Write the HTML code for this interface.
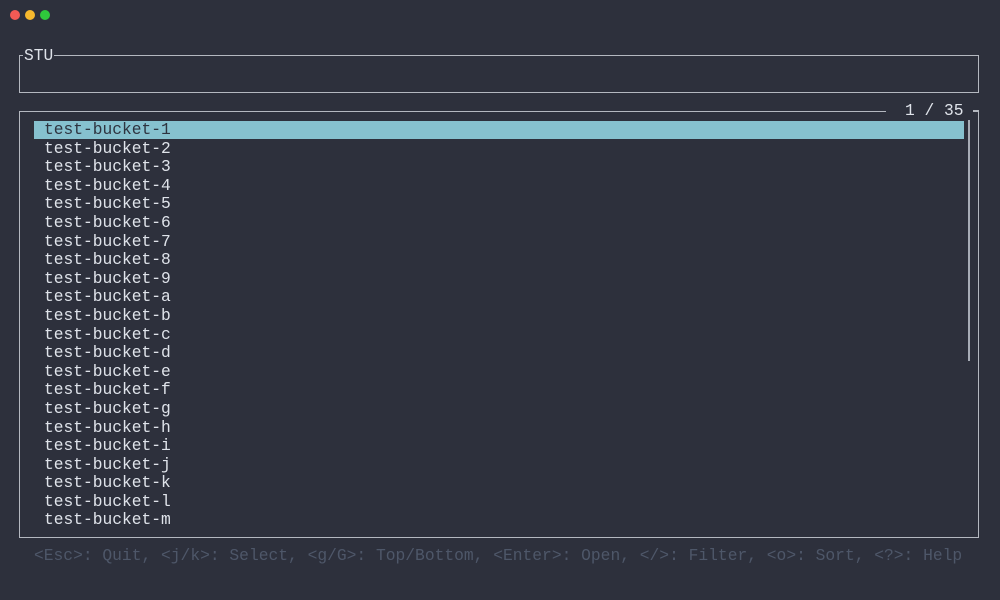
<!DOCTYPE html>
<html><head><meta charset="utf-8"><style>
html,body{margin:0;padding:0;}
body{width:1000px;height:600px;background:#2d303c;position:relative;overflow:hidden;font-family:"Liberation Mono",monospace;font-size:16.25px;color:#dfe3ea;}
.dot{position:absolute;top:10px;width:10px;height:10px;border-radius:50%;}
.box{position:absolute;border:1.5px solid #b4b8c0;box-sizing:border-box;}
.t{position:absolute;white-space:pre;line-height:18.6px;}
.lbl{position:absolute;background:#2d303c;white-space:pre;line-height:18px;}
</style></head><body>
<div class="dot" style="left:10px;background:#f25a55"></div>
<div class="dot" style="left:25px;background:#f6b92e"></div>
<div class="dot" style="left:40px;background:#2fc93c"></div>

<div class="box" style="left:19px;top:55px;width:960px;height:38px"></div>
<div class="lbl" style="left:23px;top:47px;padding:0 1px">STU</div>

<div class="box" style="left:19px;top:111px;width:960px;height:427px"></div>
<div class="lbl" style="left:886px;top:102px;width:87px;padding-left:19px;box-sizing:border-box"> </div>
<div class="lbl" style="left:905px;top:102px;background:none">1 / 35</div>
<div style="position:absolute;left:973px;top:110px;width:7px;height:8px;background:#2d303c"></div>
<div style="position:absolute;left:973px;top:110px;width:6px;height:1.5px;background:#b4b8c0"></div>
<div style="position:absolute;left:977.5px;top:110px;width:1.5px;height:10px;background:#b4b8c0"></div>
<div style="position:absolute;left:968px;top:120px;width:2px;height:241px;background:#a7acb6"></div>

<div style="position:absolute;left:34px;top:121px;width:930px;height:18px;background:#86c1cf"></div>
<div class="t" style="left:44px;top:121px"><span style="color:#2e3440">test-bucket-1</span>
test-bucket-2
test-bucket-3
test-bucket-4
test-bucket-5
test-bucket-6
test-bucket-7
test-bucket-8
test-bucket-9
test-bucket-a
test-bucket-b
test-bucket-c
test-bucket-d
test-bucket-e
test-bucket-f
test-bucket-g
test-bucket-h
test-bucket-i
test-bucket-j
test-bucket-k
test-bucket-l
test-bucket-m</div>

<div class="t" style="left:34px;top:547px;color:#4e5769;font-size:16.3px">&lt;Esc&gt;: Quit, &lt;j/k&gt;: Select, &lt;g/G&gt;: Top/Bottom, &lt;Enter&gt;: Open, &lt;/&gt;: Filter, &lt;o&gt;: Sort, &lt;?&gt;: Help</div>
</body></html>
